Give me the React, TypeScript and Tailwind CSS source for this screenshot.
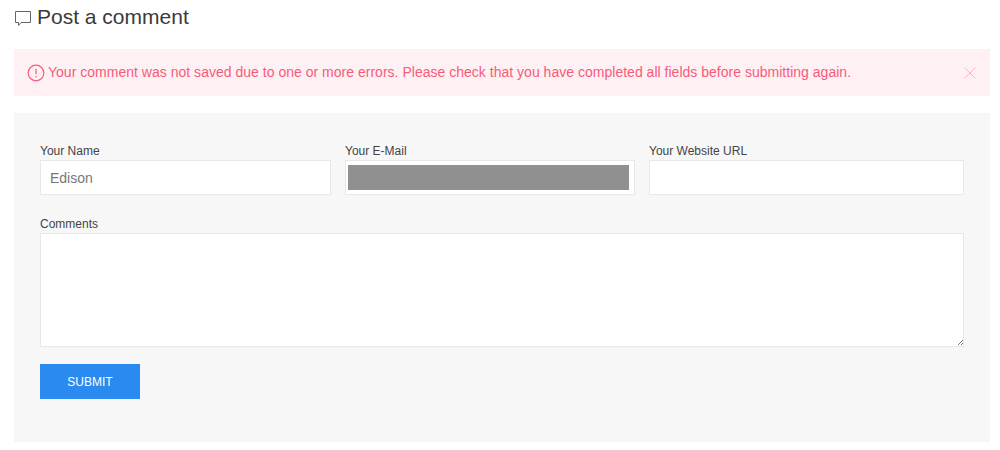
export default function App() {
  return (
    <div className="h-[450px] bg-white pl-[14px] pr-[10px] font-['Liberation_Sans',Arial,sans-serif] text-[#444]">
      <div className="flex h-[49px] items-start">
        <h2 className="flex items-center pt-[4px] text-[21px] leading-[26px] text-[#3a3a3a]">
          <svg width="18" height="18" viewBox="0 0 18 18" fill="none" stroke="#666" strokeWidth="1" className="mr-[5px] mt-[2px]">
            <path d="M1.500 2.500h15v11H7l-2.500 3v-3h-3z" />
          </svg>
          Post a comment
        </h2>
      </div>

      <div className="flex h-[47px] items-center bg-[#fff0f3] pl-[13px] pr-[14px] text-[14px] tracking-[0.016px] text-[#f75b7a]">
        <svg width="18" height="18" viewBox="0 0 18 18" fill="none" stroke="#f75b7a" strokeWidth="1.200" className="mr-[3px] mt-[1px] shrink-0">
          <circle cx="9" cy="9" r="7.800" />
          <path d="M9 4.800v5.400M9 12v1.400" />
        </svg>
        <span className="flex-1">Your comment was not saved due to one or more errors. Please check that you have completed all fields before submitting again.</span>
        <svg width="12" height="12" viewBox="0 0 12 12" stroke="#ffb3c2" strokeWidth="1" className="shrink-0">
          <path d="M.5.5l11 11M11.500.5l-11 11" />
        </svg>
      </div>

      <form className="mt-[17px] h-[329px] bg-[#f7f7f7] px-[26px] pt-[30px]">
        <div className="flex gap-[14px]">
          <div className="w-[291px]">
            <label className="block h-[17px] text-[12px] leading-[16px]">Your Name</label>
            <input defaultValue="Edison" className="block h-[35px] w-full border border-[#e8e8e8] bg-white px-[9px] text-[14px] text-[#777] outline-none" />
          </div>
          <div className="w-[290px]">
            <label className="block h-[17px] text-[12px] leading-[16px]">Your E-Mail</label>
            <div className="h-[35px] border border-[#e8e8e8] bg-white py-[4px] pl-[2px] pr-[5px]">
              <div className="h-full bg-[#909090]" />
            </div>
          </div>
          <div className="flex-1">
            <label className="block h-[17px] text-[12px] leading-[16px]">Your Website URL</label>
            <input className="block h-[35px] w-full border border-[#e8e8e8] bg-white px-[9px] text-[14px] outline-none" />
          </div>
        </div>

        <label className="mt-[21px] block h-[17px] text-[12px] leading-[16px]">Comments</label>
        <div className="relative">
          <textarea className="block h-[114px] w-full resize-none border border-[#e8e8e8] bg-white px-[9px] py-[6px] text-[14px] outline-none" />
          <svg width="5" height="5" viewBox="0 0 5 5" stroke="#777" strokeWidth="1" className="absolute bottom-[2px] right-[1px]">
            <path d="M0 5l5-5M3 5l2-2" />
          </svg>
        </div>

        <button type="button" className="mt-[17px] block h-[35px] w-[100px] bg-[#2b8af0] text-[12px] text-white">SUBMIT</button>
      </form>
    </div>
  );
}
